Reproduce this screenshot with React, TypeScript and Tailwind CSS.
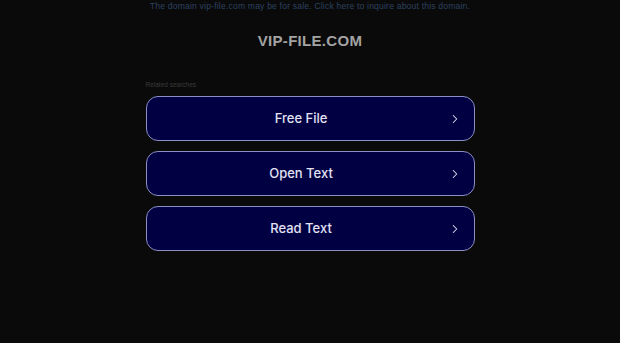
import { ChevronRight } from 'lucide-react'

const searches = ['Free File', 'Open Text', 'Read Text']

export default function App() {
  return (
    <div className="min-h-[343px] w-full bg-[#0a0a0a] font-['Liberation_Sans',Arial,sans-serif]">
      <div className="flex flex-col items-center">
        {/* Sale banner */}
        <p className="pt-px text-[8.6px] leading-[10px] tracking-[0.18px] text-[#2d4260]">
          The domain vip-file.com may be for sale. Click here to inquire about this domain.
        </p>

        {/* Domain title */}
        <h1 className="mt-[21px] text-[15px] font-bold leading-[18px] tracking-[0.3px] text-[#a3a3a3]">
          VIP-FILE.COM
        </h1>

        <div className="mt-[31px] w-[329px]">
          <p className="text-[6.5px] leading-[8px] text-[#3a3a3a]">Related searches</p>

          <div className="mt-[7px] flex flex-col gap-[10px]">
            {searches.map(s => (
              <a
                key={s}
                href="#"
                className="flex h-[45px] items-center rounded-[12px] border border-[#8c8fc4] bg-[#010043] pl-4 pr-3 font-['Inter',sans-serif] text-[13px] font-medium text-[#e2e2f4]"
              >
                <span className="flex-1 text-center">{s}</span>
                <ChevronRight className="ml-2 h-[14px] w-[14px] text-[#e2e2f4]" strokeWidth={1.8} />
              </a>
            ))}
          </div>
        </div>
      </div>
    </div>
  )
}
